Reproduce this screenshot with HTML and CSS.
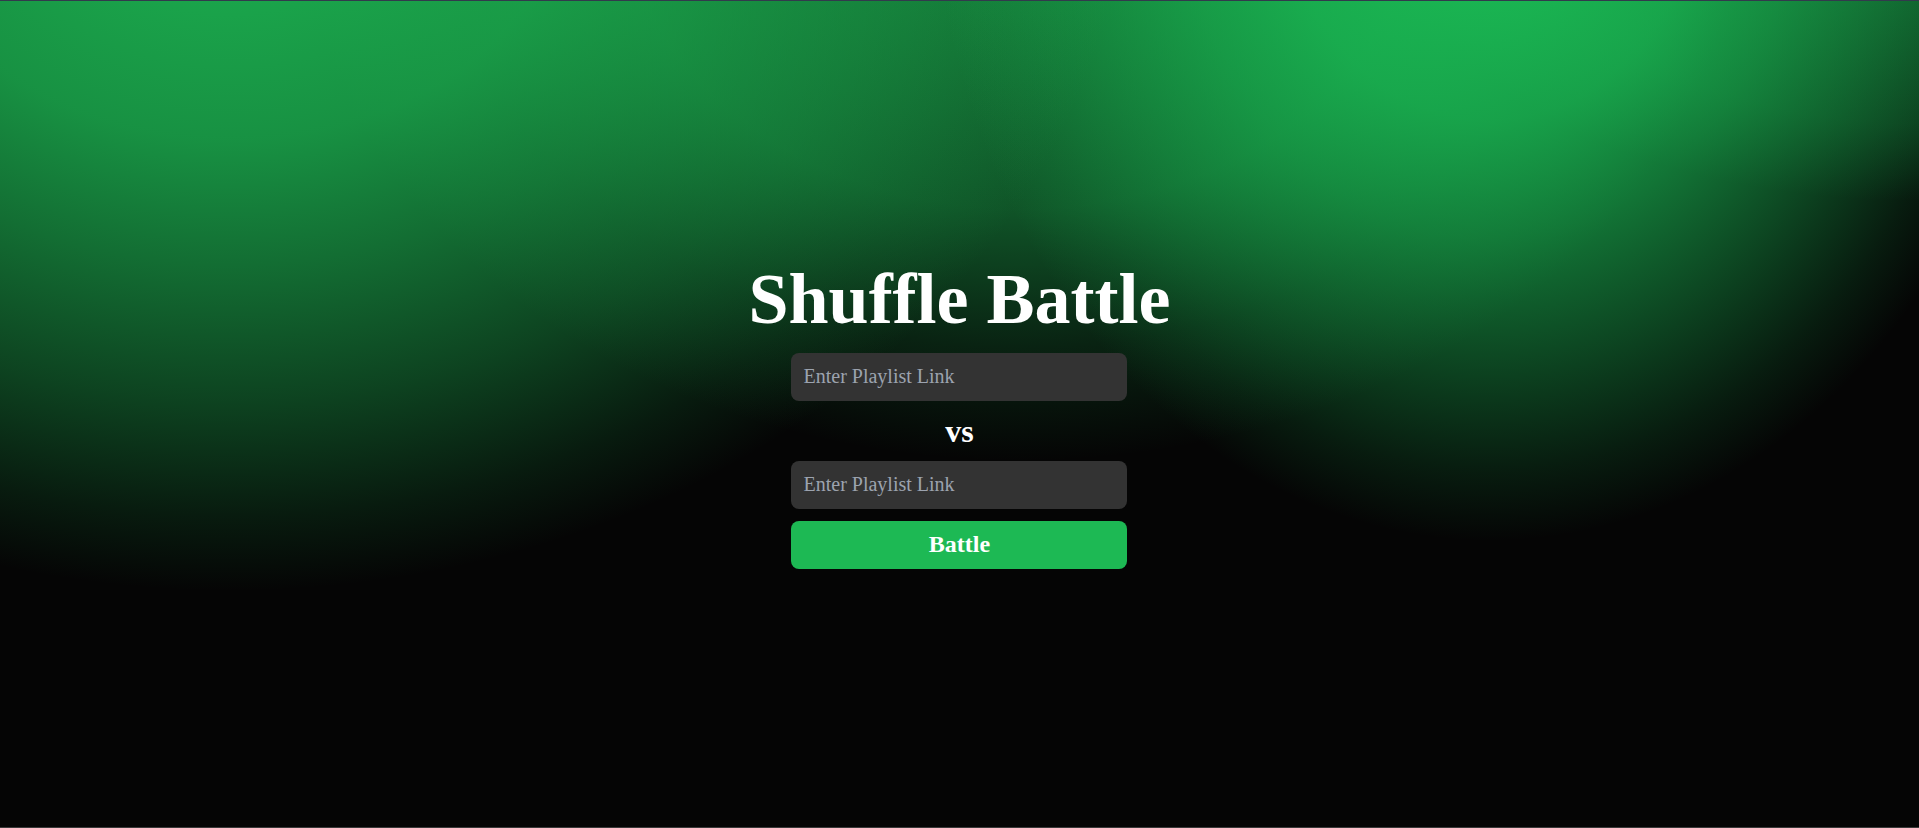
FILE: index.html
```html
<!DOCTYPE html>
<html lang="en">
<head>
<meta charset="utf-8">
<title>Shuffle Battle</title>
<link rel="stylesheet" href="styles.css">
</head>
<body>
<main class="page">
  <div class="stack">
    <h1 class="title">Shuffle Battle</h1>
    <input class="field" type="text" placeholder="Enter Playlist Link">
    <h2 class="vs">vs</h2>
    <input class="field" type="text" placeholder="Enter Playlist Link">
    <button class="battle" type="button">Battle</button>
  </div>
</main>
</body>
</html>
```

FILE: styles.css
```css
html, body {
  margin: 0;
  padding: 0;
}

body {
  font-family: "Liberation Serif", "Times New Roman", serif;
  background: #050505;
  color: #fff;
}

.page {
  box-sizing: border-box;
  height: 100vh;
  padding-bottom: 2px;
  border-top: 1px solid #323a4c;
  border-bottom: 1px solid #3a3a3a;
  display: flex;
  align-items: center;
  justify-content: center;
  background-color: #050505;
  background-image:
    radial-gradient(ellipse 560px 690px at 1490px -150px,
      rgba(27,192,87,0.97) 0%,
      rgba(27,192,87,0.9) 21%,
      rgba(27,192,87,0.8) 39%,
      rgba(27,192,87,0.6) 56%,
      rgba(27,192,87,0.35) 74%,
      rgba(27,192,87,0.12) 90%,
      rgba(27,192,87,0) 100%),
    radial-gradient(ellipse 900px 740px at 230px -150px,
      rgba(29,185,84,0.95) 0%,
      rgba(29,185,84,0.88) 21%,
      rgba(29,185,84,0.78) 39%,
      rgba(29,185,84,0.58) 56%,
      rgba(29,185,84,0.35) 74%,
      rgba(29,185,84,0.12) 90%,
      rgba(29,185,84,0) 100%),
    radial-gradient(ellipse 720px 560px at 1020px -100px,
      rgba(29,185,84,0.64) 0%,
      rgba(29,185,84,0.58) 20%,
      rgba(29,185,84,0.44) 55%,
      rgba(29,185,84,0.16) 80%,
      rgba(29,185,84,0) 100%),
    radial-gradient(ellipse 500px 250px at 1919px -50px,
      rgba(29,185,84,0.45) 0%,
      rgba(29,185,84,0.36) 20%,
      rgba(29,185,84,0.2) 69%,
      rgba(29,185,84,0) 100%);
}

.stack {
  display: flex;
  flex-direction: column;
  align-items: center;
  gap: 12px;
}

.title {
  margin: 0;
  font-size: 72px;
  font-weight: bold;
  color: #fff;
}

.vs {
  margin: 0;
  font-size: 32px;
  line-height: 36px;
  font-weight: bold;
  color: #fff;
}

.field {
  box-sizing: border-box;
  width: 336px;
  height: 48px;
  padding: 0 12px;
  border: none;
  border-radius: 8px;
  background: #333333;
  color: #fff;
  font-family: "Liberation Serif", "Times New Roman", serif;
  font-size: 20px;
  outline: none;
}

.field::placeholder {
  color: #9ca3af;
}

.battle {
  box-sizing: border-box;
  width: 336px;
  height: 48px;
  border: none;
  border-radius: 8px;
  background: #1db954;
  color: #fff;
  font-family: "Liberation Serif", "Times New Roman", serif;
  font-size: 24px;
  font-weight: bold;
  cursor: pointer;
}
```
